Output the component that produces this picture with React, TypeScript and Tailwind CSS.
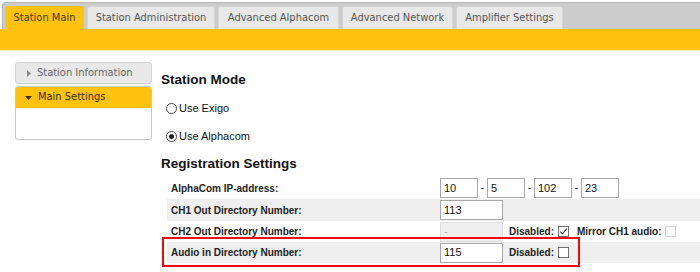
import React from "react";

const tabFont = { fontFamily: '"DejaVu Sans", Verdana, sans-serif', fontStretch: "condensed" as const };

function Tab({ label, w, active }: { label: string; w: string; active?: boolean }) {
  return (
    <div
      className={
        "h-[23px] flex items-center justify-center rounded-t-[3px] border border-b-0 text-[11px] " +
        w +
        " " +
        (active
          ? "bg-[#fec20f] border-[#fec20f] text-[#4a3a06]"
          : "bg-[#e8e8e8] border-[#d6d6d6] text-[#555555]")
      }
      style={tabFont}
    >
      {label}
    </div>
  );
}

function Radio({ checked, label }: { checked?: boolean; label: string }) {
  return (
    <div className="h-[16px] flex items-center ml-[5px]">
      <div className="w-[11px] h-[11px] rounded-full border border-[#444] bg-white flex items-center justify-center">
        {checked && <div className="w-[5px] h-[5px] rounded-full bg-[#222]" />}
      </div>
      <span className="ml-[2px] text-[11px] text-[#111]">{label}</span>
    </div>
  );
}

function Check({ checked, disabled }: { checked?: boolean; disabled?: boolean }) {
  return (
    <div
      className={
        "w-[11px] h-[11px] border bg-white flex items-center justify-center " +
        (disabled ? "border-[#d4d4d4]" : "border-[#707070]")
      }
    >
      {checked && (
        <svg width="9" height="9" viewBox="0 0 9 9">
          <polyline points="1.2,4.6 3.4,7 7.8,1.6" fill="none" stroke="#333" strokeWidth="1.1" />
        </svg>
      )}
    </div>
  );
}

function Input({ value, w, disabled }: { value: string; w: string; disabled?: boolean }) {
  return (
    <div
      className={
        "h-[20px] border flex items-center px-[3px] text-[11px] " +
        w +
        " " +
        (disabled ? "bg-[#efefef] border-[#dcdcdc] text-[#aaaaaa]" : "bg-white border-[#a8a8a8] text-[#111]")
      }
    >
      {value}
    </div>
  );
}

function Row({ label, gray, children, h }: { label: string; gray?: boolean; children: React.ReactNode; h: string }) {
  return (
    <div className={"flex items-center " + h + " " + (gray ? "bg-[#efefef]" : "bg-white")}>
      <div className="w-[273px] pl-[4px] text-[10px] font-bold text-[#222]">{label}</div>
      <div className="flex items-center">{children}</div>
    </div>
  );
}

function Dash() {
  return <span className="w-[9px] text-center text-[10.5px] text-[#222]">-</span>;
}

export default function App() {
  return (
    <div
      className="w-[700px] h-[272px] bg-white overflow-hidden"
      style={{ fontFamily: '"Liberation Sans", Arial, sans-serif' }}
    >
      <div className="mt-[2px] ml-[2px] h-[27px] bg-[#cccccc] border-t border-l border-[#b8b8b8] rounded-tl-[4px] flex items-end gap-[3px] pl-[2px]">
        <Tab label="Station Main" w="w-[79px]" active />
        <Tab label="Station Administration" w="w-[128px]" />
        <Tab label="Advanced Alphacom" w="w-[121px]" />
        <Tab label="Advanced Network" w="w-[111px]" />
        <Tab label="Amplifier Settings" w="w-[107px]" />
      </div>
      <div className="h-[22px] bg-[#fec20f] border-b border-[#fde7a0]" />

      <div className="flex">
        <div className="ml-[15px] mt-[11px] w-[137px] flex flex-col gap-[2px]" style={tabFont}>
          <div className="h-[22px] bg-[#e8e8e8] border border-[#d4d4d4] rounded-[3px] flex items-center pl-[11px] text-[11px] text-[#666]">
            <svg width="4" height="7" viewBox="0 0 4 7" className="mr-[6px]">
              <polygon points="0,0 4,3.5 0,7" fill="#8a8a8a" />
            </svg>
            Station Information
          </div>
          <div className="h-[54px] border border-[#c8c8c8] rounded-[3px] bg-white overflow-hidden">
            <div className="h-[21px] bg-[#fec20f] flex items-center pl-[9px] text-[11px] text-[#3a2e05]">
              <svg width="7" height="4" viewBox="0 0 7 4" className="mr-[6px]">
                <polygon points="0,0 7,0 3.5,4" fill="#3a2e05" />
              </svg>
              Main Settings
            </div>
          </div>
        </div>

        <div className="ml-[9px] mt-[21px] flex-1 flex flex-col">
          <div className="h-[15px] leading-[15px] text-[13.5px] font-bold text-[#111]">Station Mode</div>
          <div className="mt-[13px]">
            <Radio label="Use Exigo" />
          </div>
          <div className="mt-[12px]">
            <Radio label="Use Alphacom" checked />
          </div>
          <div className="mt-[12px] h-[15px] leading-[15px] text-[13.5px] font-bold text-[#111]">
            Registration Settings
          </div>
          <div className="mt-[6px] ml-[6px] flex flex-col">
            <Row label="AlphaCom IP-address:" h="h-[22px]">
              <Input value="10" w="w-[38px]" />
              <Dash />
              <Input value="5" w="w-[38px]" />
              <Dash />
              <Input value="102" w="w-[38px]" />
              <Dash />
              <Input value="23" w="w-[38px]" />
            </Row>
            <Row label="CH1 Out Directory Number:" gray h="h-[22px]">
              <Input value="113" w="w-[63px]" />
            </Row>
            <Row label="CH2 Out Directory Number:" h="h-[21px]">
              <Input value="-" w="w-[63px]" disabled />
              <span className="ml-[6px] text-[10px] font-bold text-[#222]">Disabled:</span>
              <div className="ml-[4px]">
                <Check checked />
              </div>
              <span className="ml-[8px] text-[10px] font-bold text-[#222]">Mirror CH1 audio:</span>
              <div className="ml-[4px]">
                <Check disabled />
              </div>
            </Row>
            <div className="relative">
              <Row label="Audio in Directory Number:" gray h="h-[21px]">
                <Input value="115" w="w-[63px]" />
                <span className="ml-[6px] text-[10px] font-bold text-[#222]">Disabled:</span>
                <div className="ml-[4px]">
                  <Check />
                </div>
              </Row>
              <div className="absolute left-[-5px] top-[-5px] w-[418px] h-[30px] border-2 border-[#ec0a0a]" />
            </div>
          </div>
        </div>
      </div>
    </div>
  );
}
